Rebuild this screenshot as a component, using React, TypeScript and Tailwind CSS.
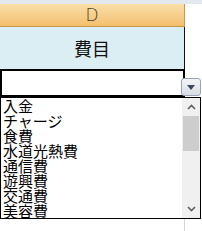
const items = ['入金', 'チャージ', '食費', '水道光熱費', '通信費', '遊興費', '交通費', '美容費']

export default function App() {
  return (
    <div
      className="relative h-[231px] w-[202px] overflow-hidden bg-white"
      style={{ fontFamily: '"Noto Sans CJK JP", "Noto Sans", sans-serif' }}
    >
      <div className="h-[4px] w-full bg-[#e4e9ef]" />
      <div
        className="flex h-[23px] w-[185px] items-center justify-center border-r border-b border-[#c9974a] bg-gradient-to-b from-[#fadfa8] to-[#f3bf6e] text-[17px] leading-none text-[#4a3b22]"
        style={{ fontFamily: '"DejaVu Sans", sans-serif', fontWeight: 300 }}
      >
        D
      </div>
      <div className="flex h-[42px] w-[185px] items-center justify-center border-r border-[#111] bg-[#daeef3] text-[18px] text-[#111]">
        費目
      </div>
      <div className="h-[28px] w-[185px] border-2 border-black bg-white" />

      <button className="absolute top-[78px] left-[181px] flex h-[18px] w-[20px] items-center justify-center rounded-[3px] border border-[#9aa3b4] bg-gradient-to-b from-[#f4f5f8] to-[#d9dde5]">
        <svg width="8" height="5" viewBox="0 0 8 5">
          <path d="M0 0h8L4 5z" fill="#3a4560" />
        </svg>
      </button>

      <div className="flex h-[122px] w-[201px] border border-black bg-white">
        <ul className="flex-1 overflow-hidden pl-[2px] text-[15px] leading-[15px] text-black">
          {items.map((item) => (
            <li key={item} className="h-[15px] whitespace-nowrap">
              {item}
            </li>
          ))}
        </ul>
        <div className="flex w-[18px] flex-col bg-[#f0f0f0]">
          <div className="flex h-[18px] items-center justify-center">
            <svg width="9" height="6" viewBox="0 0 9 6">
              <path d="M1 5l3.5-3.5L8 5" stroke="#606060" strokeWidth="1.6" fill="none" />
            </svg>
          </div>
          <div className="mx-[1px] h-[35px] bg-[#cdcdcd]" />
          <div className="flex-1" />
          <div className="flex h-[18px] items-center justify-center">
            <svg width="9" height="6" viewBox="0 0 9 6">
              <path d="M1 1l3.5 3.5L8 1" stroke="#606060" strokeWidth="1.6" fill="none" />
            </svg>
          </div>
        </div>
      </div>
      <div className="ml-[184px] h-[20px] w-[1px] bg-[#d4d4d4]" />
    </div>
  )
}
